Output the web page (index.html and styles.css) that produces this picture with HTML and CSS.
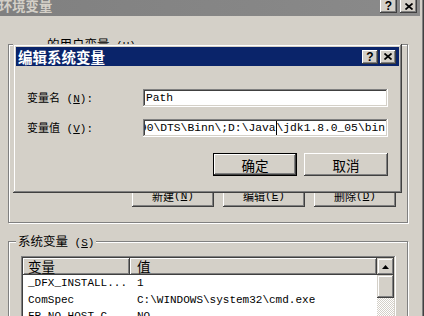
FILE: index.html
```html
<!DOCTYPE html>
<html lang="zh-CN">
<head>
<meta charset="utf-8">
<title>环境变量</title>
<link rel="stylesheet" href="styles.css">
</head>
<body>
<div class="win">
  <div class="titlebar">
    <span class="title">环境变量</span>
    <div class="tbtns">
      <span class="tbtn q">?</span>
      <span class="tbtn"><svg width="8" height="7" viewBox="0 0 8 7"><path d="M0.5 0.5L7.5 6.5M7.5 0.5L0.5 6.5" stroke="#000" stroke-width="1.7"/></svg></span>
    </div>
  </div>

  <div class="group user">
    <span class="glabel">的用户变量<span class="acc"> (<u>U</u>)</span></span>
    <div class="btnrow">
      <span class="btn small">新建<span class="acc"> (<u>N</u>)</span></span>
      <span class="btn small">编辑<span class="acc"> (<u>E</u>)</span></span>
      <span class="btn small">删除<span class="acc"> (<u>D</u>)</span></span>
    </div>
  </div>

  <div class="group sys">
    <span class="glabel">系统变量<span class="acc"> (<u>S</u>)</span></span>
    <div class="list">
      <div class="list-main">
        <div class="lhead"><span class="hc c1">变量</span><span class="hc c2">值</span></div>
        <div class="lrow"><span class="c1">_DFX_INSTALL...</span><span class="c2">1</span></div>
        <div class="lrow"><span class="c1">ComSpec</span><span class="c2">C:\WINDOWS\system32\cmd.exe</span></div>
        <div class="lrow"><span class="c1">FP_NO_HOST_C...</span><span class="c2">NO</span></div>
        <div class="lrow"><span class="c1">INCLUDE</span><span class="c2">C:\Program Files\</span></div>
      </div>
      <div class="vscroll">
        <span class="sbtn"><svg width="7" height="4" viewBox="0 0 7 4"><path d="M3.5 0L7 4H0Z" fill="#000"/></svg></span>
        <span class="thumb"></span>
        <span class="track"></span>
      </div>
    </div>
  </div>

  <div class="dialog">
    <div class="dtitle">
      <span>编辑系统变量</span>
      <div class="dtbtns">
        <span class="tbtn d q">?</span>
        <span class="tbtn d"><svg width="8" height="7" viewBox="0 0 8 7"><path d="M0.5 0.5L7.5 6.5M7.5 0.5L0.5 6.5" stroke="#000" stroke-width="1.7"/></svg></span>
      </div>
    </div>
    <div class="dbody">
      <div class="form">
        <span class="lbl">变量名<span class="acc"> (<u>N</u>):</span></span>
        <div class="input"><div class="itext">Path</div></div>
        <span class="lbl">变量值<span class="acc"> (<u>V</u>):</span></span>
        <div class="input"><div class="itext scroll">Server\90\DTS\Binn\;D:\Java<span class="caret"></span>\jdk1.8.0_05\bin</div></div>
      </div>
      <div class="dbtns">
        <span class="btn big default">确定</span>
        <span class="btn big">取消</span>
      </div>
    </div>
  </div>
</div>
</body>
</html>
```

FILE: styles.css
```css
* { box-sizing: border-box; margin: 0; padding: 0; }

body {
  width: 424px;
  height: 316px;
  overflow: hidden;
  background: #d4d0c8;
  font-family: "Noto Sans CJK SC", "Noto Sans", sans-serif;
  font-size: 13px;
  color: #000;
}

.win {
  position: relative;
  width: 424px;
  height: 316px;
  overflow: hidden;
  padding-right: 4px;
  background: #d4d0c8;
  box-shadow: inset -1px 0 #404040, inset -2px 0 #808080;
}

.titlebar {
  height: 20px;
  margin-top: -4px;
  background: linear-gradient(90deg, #808080, #8a8a8a);
  display: flex;
  align-items: center;
  justify-content: space-between;
  padding: 0 3px 0 0;
}

.title {
  color: #d4d0c8;
  font-weight: bold;
  font-size: 13.3px;
  line-height: 16px;
  margin-left: -1px;
}

.tbtns, .dtbtns { display: flex; gap: 3px; }
.dtbtns { gap: 2px; }

.tbtn {
  width: 17px;
  height: 14px;
  background: #d4d0c8;
  box-shadow: inset -1px -1px #404040, inset 1px 1px #fff, inset -2px -2px #808080, inset 2px 2px #d4d0c8;
  display: flex;
  align-items: center;
  justify-content: center;
}
.tbtn.d { width: 16px; }
.tbtn.q {
  font-family: "Liberation Sans", sans-serif;
  font-weight: bold;
  font-size: 12px;
  line-height: 14px;
  color: #000;
}

.acc {
  font-family: "Liberation Mono", monospace;
  font-size: 11px;
}
.acc u { text-decoration-thickness: 1px; text-underline-offset: 1px; }

/* group boxes */
.group {
  margin-left: 8px;
  width: 400px;
  border: 1px solid #808080;
  box-shadow: inset 1px 1px #fff, 1px 1px #fff;
  display: flex;
  flex-direction: column;
}

.glabel {
  align-self: flex-start;
  margin: -8px 0 0 7px;
  padding: 0 2px;
  background: #d4d0c8;
  line-height: 14px;
  font-size: 12.5px;
}

.user {
  margin-top: 28px;
  height: 179px;
  padding: 0 11px 15px 0;
}
.user .glabel { margin-left: 36px; }

.btnrow {
  margin-top: auto;
  display: flex;
  justify-content: flex-end;
  gap: 9px;
}

.btn {
  background: #d4d0c8;
  box-shadow: inset -1px -1px #404040, inset 1px 1px #fff, inset -2px -2px #808080, inset 2px 2px #d4d0c8;
  display: flex;
  align-items: center;
  justify-content: center;
  height: 23px;
}
.btn.small { width: 82px; font-size: 11px; }
.btn.big { width: 84px; font-size: 13.5px; line-height: 16px; }
.btn.default {
  box-shadow: inset 0 0 0 1px #000, inset -2px -2px #404040, inset 2px 2px #fff, inset -3px -3px #808080;
}

.sys {
  margin-top: 18px;
  height: 100px;
}

/* list view */
.list {
  margin: 6px 0 0 12px;
  width: 375px;
  height: 90px;
  background: #fff;
  padding: 2px;
  box-shadow: inset -1px -1px #fff, inset 1px 1px #808080, inset -2px -2px #d4d0c8, inset 2px 2px #404040;
  display: flex;
}

.list-main { flex: 1; display: flex; flex-direction: column; }

.lhead { display: flex; height: 17px; flex: none; }
.hc {
  background: #d4d0c8;
  box-shadow: inset -1px -1px #404040, inset 1px 1px #fff, inset -2px -2px #808080;
  line-height: 17px;
  font-size: 13.5px;
  padding-left: 5px;
}
.c1 { width: 107px; flex: none; }
.hc.c2 { flex: 1; padding-left: 7px; }

.lrow {
  display: flex;
  flex: none;
  height: 16.5px;
  line-height: 16.5px;
  font-family: "Liberation Mono", monospace;
  font-size: 11px;
  white-space: pre;
}
.lrow .c1 { padding-left: 5px; }
.lrow .c2 { padding-left: 7px; }

.vscroll { width: 17px; display: flex; flex-direction: column; }
.sbtn, .thumb {
  background: #d4d0c8;
  box-shadow: inset -1px -1px #404040, inset 1px 1px #d4d0c8, inset -2px -2px #808080, inset 2px 2px #fff;
}
.sbtn { height: 17px; display: flex; align-items: center; justify-content: center; }
.thumb { height: 23px; }
.track {
  flex: 1;
  background: repeating-conic-gradient(#d4d0c8 0 25%, #fff 0 50%) 0 0 / 2px 2px;
}

/* dialog */
.dialog {
  position: absolute;
  left: 13px;
  top: 44px;
  width: 389px;
  height: 149px;
  background: #d4d0c8;
  padding: 3px;
  box-shadow: inset -1px -1px #404040, inset 1px 1px #d4d0c8, inset -2px -2px #808080, inset 2px 2px #fff;
  display: flex;
  flex-direction: column;
}

.dtitle {
  height: 19px;
  background: #0a246a;
  color: #fff;
  font-weight: bold;
  font-size: 14.5px;
  line-height: 17px;
  display: flex;
  align-items: center;
  justify-content: space-between;
  padding: 0 3px 0 2px;
}

.dbody { padding: 23px 11px 0 11px; }

.form {
  display: grid;
  grid-template-columns: 116px minmax(0, 1fr);
  row-gap: 12px;
  align-items: center;
}

.lbl { font-size: 11px; line-height: 14px; }

.input {
  min-width: 0;
  height: 18px;
  background: #fff;
  padding: 2px;
  box-shadow: inset -1px -1px #fff, inset 1px 1px #808080, inset -2px -2px #d4d0c8, inset 2px 2px #404040;
}

.itext {
  width: 100%;
  height: 14px;
  padding: 0 1px;
  font-family: "Liberation Mono", monospace;
  font-size: 11.3px;
  line-height: 14px;
  white-space: pre;
  overflow: hidden;
  display: flex;
}
.itext.scroll { justify-content: flex-end; }

.caret {
  width: 0;
  height: 14px;
  border-left: 1px solid #000;
}

.dbtns {
  display: flex;
  justify-content: flex-end;
  gap: 7px;
  margin-top: 16px;
}
```
